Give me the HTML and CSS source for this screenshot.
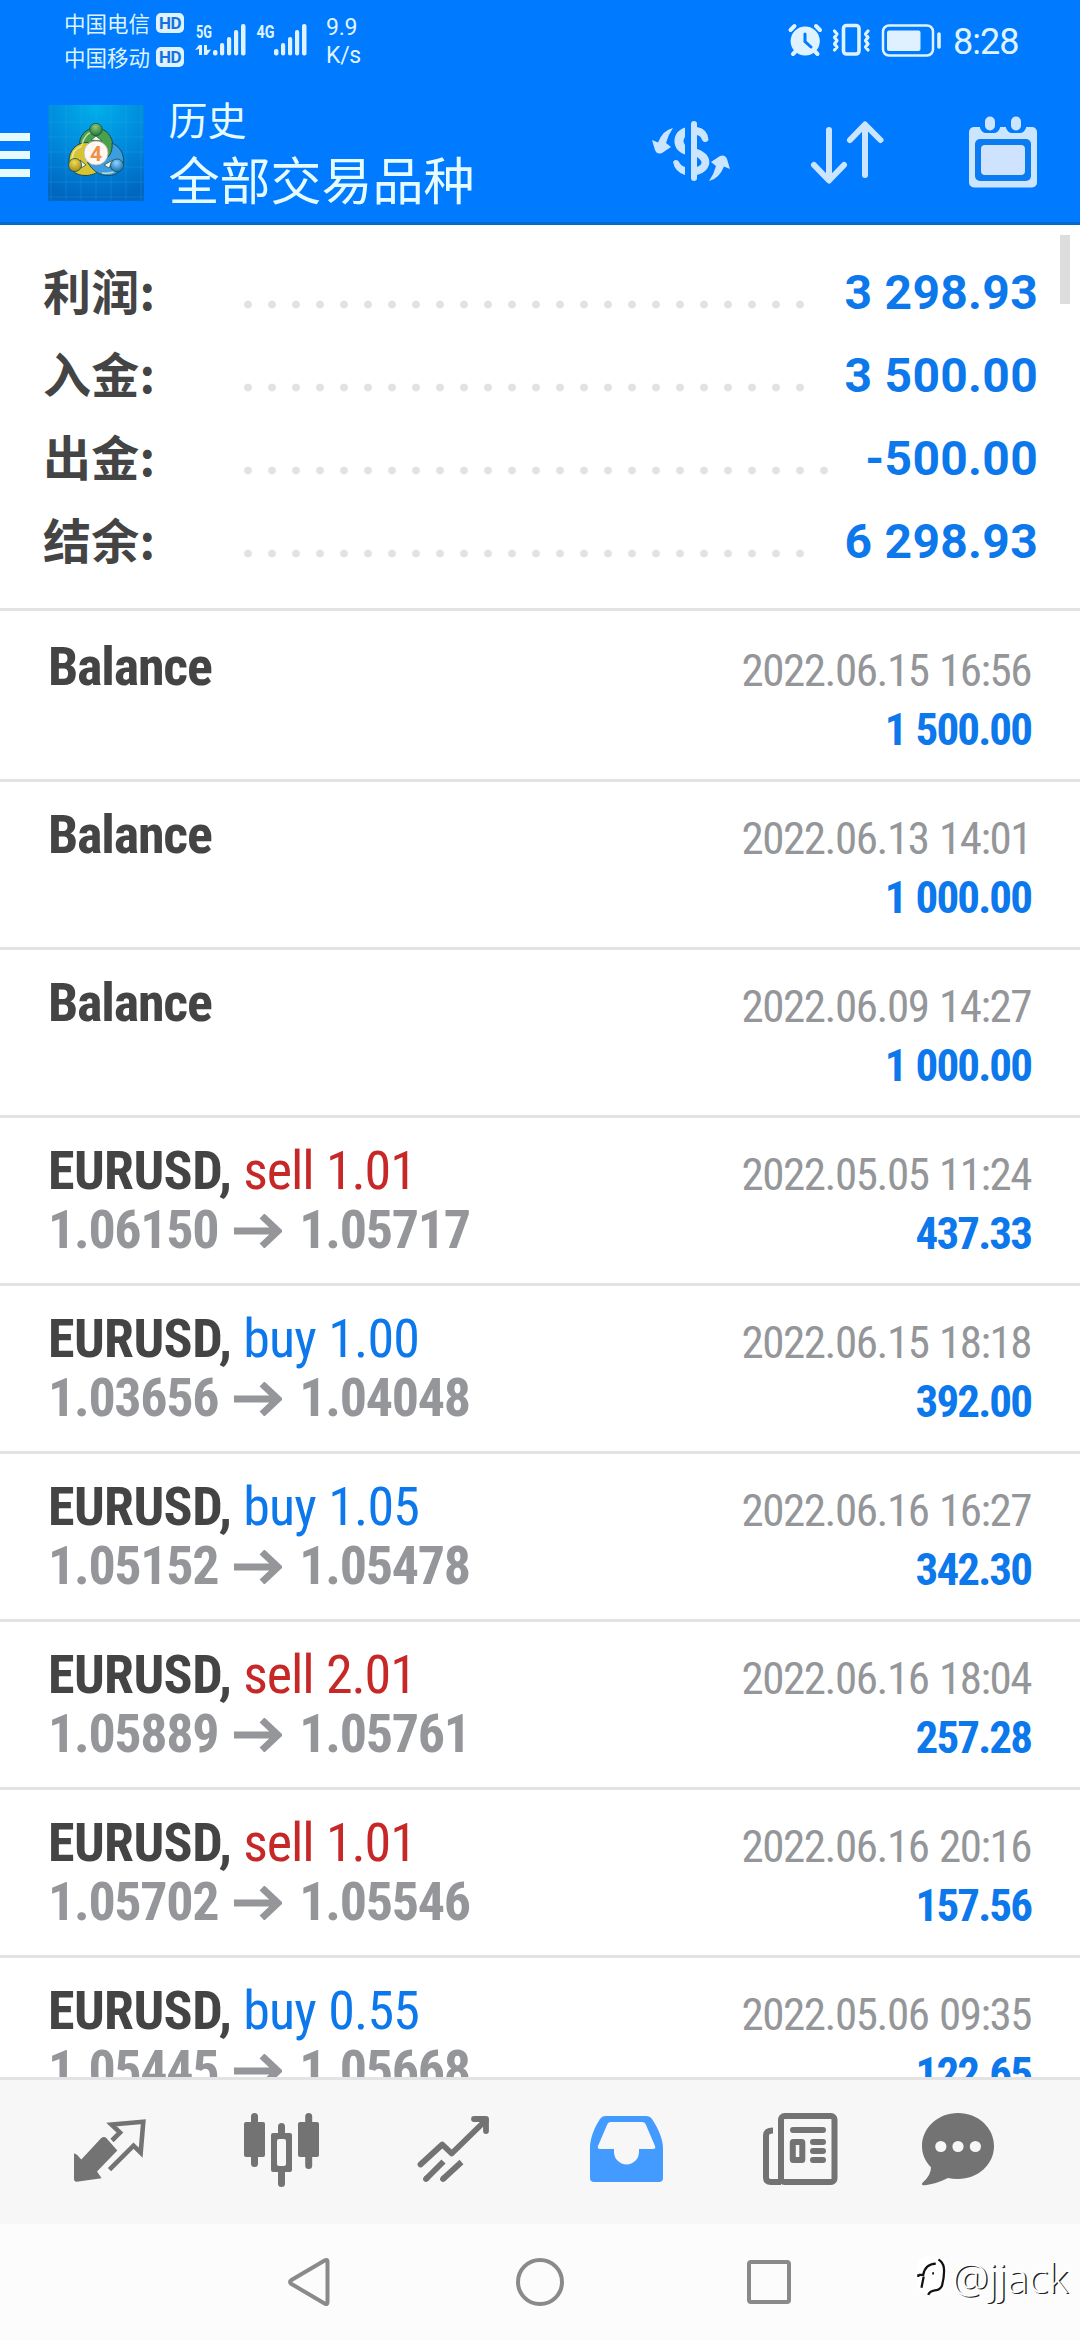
FILE: index.html
```html
<!DOCTYPE html>
<html lang="zh-CN">
<head>
<meta charset="utf-8">
<title>历史</title>
<link rel="stylesheet" href="styles.css">
</head>
<body>
<div class="screen">
  <header class="header">
    <div class="status">
      <div class="carriers">
        <div class="carrier"><span>中国电信</span><b class="hd">HD</b></div>
        <div class="carrier"><span>中国移动</span><b class="hd">HD</b></div>
      </div>
      <svg class="signals" viewBox="194 18 116 44" fill="#dff3ff">
        <text class="net" x="196" y="38" textLength="16" lengthAdjust="spacingAndGlyphs">5G</text>
        <path d="M195 50l4-5h3v10h-3v-6zM211 49.500l-4 5.500h-3v-10h3v5z"/>
        <rect x="213" y="50" width="4.500" height="5.500" rx="2"/><rect x="220" y="43" width="4.200" height="12.500" rx="2"/><rect x="227" y="37" width="4.200" height="18.500" rx="2"/><rect x="234" y="30" width="4.200" height="25.500" rx="2"/><rect x="241" y="24" width="4.500" height="31.500" rx="2"/>
        <text class="net" x="256.500" y="38" textLength="18" lengthAdjust="spacingAndGlyphs">4G</text>
        <rect x="274" y="49" width="4.500" height="6.500" rx="2"/><rect x="281" y="43" width="4.200" height="12.500" rx="2"/><rect x="288" y="37" width="4.200" height="18.500" rx="2"/><rect x="295" y="30" width="4.200" height="25.500" rx="2"/><rect x="302" y="24" width="4.500" height="31.500" rx="2"/>
      </svg>
      <div class="speed"><span>9.9</span><span>K/s</span></div>
      <svg class="sysicons" viewBox="784 18 160 44" fill="none" stroke="#dff3ff">
        <circle cx="804.200" cy="41" r="14.600" fill="#dff3ff" stroke="none"/>
        <path d="M789.500 30l4-4M819 30l-4-4M792 54l4-4M816.500 54l-4-4" stroke-width="4" stroke-linecap="round"/>
        <path d="M804 34v7.500l6 5.500" stroke="#007aff" stroke-width="3" stroke-linecap="round"/>
        <rect x="842.500" y="25.500" width="15.500" height="28.500" rx="3" stroke-width="3.600"/>
        <path d="M833.500 31l2.500 3-2.500 3.500 2.500 3-2.500 3.500 2.500 3-2.500 3M867 31l-2.500 3 2.500 3.500-2.500 3 2.500 3.500-2.500 3 2.500 3" stroke-width="3.200" stroke-linecap="round" stroke-linejoin="round"/>
        <rect x="882" y="25.500" width="50" height="30" rx="6" stroke-width="2.500"/>
        <rect x="886" y="30.500" width="33.500" height="20.500" rx="2" fill="#dff0ff" stroke="none"/>
        <path d="M938 34v13" stroke-width="3.600" stroke-linecap="round"/>
      </svg>
      <span class="clock">8:28</span>
    </div>
    <div class="appbar">
      <div class="menu"><i></i><i></i><i></i></div>
      <svg class="logo" viewBox="0 0 96 96">
        <defs>
          <radialGradient id="bg" cx=".5" cy="0" r="1"><stop offset="0" stop-color="#00b0ea"/><stop offset=".55" stop-color="#0088dc"/><stop offset="1" stop-color="#0066c0"/></radialGradient>
          <radialGradient id="g" cx=".45" cy=".3" r=".7"><stop offset="0" stop-color="#8cc878"/><stop offset="1" stop-color="#1f7a34"/></radialGradient>
          <radialGradient id="y" cx=".45" cy=".3" r=".7"><stop offset="0" stop-color="#f0dc58"/><stop offset="1" stop-color="#a58a12"/></radialGradient>
          <radialGradient id="b" cx=".45" cy=".3" r=".7"><stop offset="0" stop-color="#8fd4fa"/><stop offset="1" stop-color="#156cb4"/></radialGradient>
        </defs>
        <rect width="96" height="96" fill="url(#bg)"/>
        <path d="M3 0v96M18 0v96M33 0v96M48 0v96M63 0v96M78 0v96M93 0v96M0 17h96M0 32h96M0 47h96M0 62h96M0 77h96M0 92h96" stroke="#35b4ec" stroke-opacity=".3" stroke-width=".8"/>
        <g stroke="#174c54" stroke-width="1">
          <path d="M31.500 42c-1-11 6-19 16.500-19s17 9 17 19c0 6-2 10-5 12H36z" fill="#4aa04c"/>
          <path d="M40 37.500C28 37 21 46 21 56c0 9 7 14.500 16 14.500 6 0 12-2 14-5L45 48z" fill="#d6c432"/>
          <path d="M64 38c8 4 11.500 10 11.500 17.500 0 10-7 15-15 15-9 0-15-4-21-13l20-5c4-4 5-9 4.500-14.500z" fill="#3c9de2"/>
        </g>
        <path d="M34 40c1-7 6-13 13-14M24 55c0-7 4-12 10-14M54 68c8 1 15-1 18-8" stroke="#f0f8c8" stroke-width="1.600" fill="none" opacity=".7"/>
        <path d="M43 35l5-4 6 5zM33 63l-1-8 6 5zM61 63l4-8-9 5z" fill="#f2f7ea" stroke="#285a50" stroke-width=".8"/>
        <g stroke="#174c54" stroke-width=".8"><circle cx="48" cy="24.500" r="6.200" fill="url(#g)"/><circle cx="27" cy="60" r="6.500" fill="url(#y)"/><circle cx="69" cy="60.500" r="6.500" fill="url(#b)"/></g>
        <circle cx="48" cy="48" r="12" fill="#fff7f2" stroke="#bcb8a4" stroke-width=".8"/>
        <text class="logo-four" x="48" y="55.500" text-anchor="middle">4</text>
      </svg>
      <div class="titles"><span class="title-small">历史</span><span class="title-big">全部交易品种</span></div>
      <div class="actions">
        <svg viewBox="650 114 80 80" fill="#cce5ff">
          <rect x="690" y="121" width="6" height="60" rx="3"/>
          <path d="M684 127.500c-14 4-14 23 0 27v-9.500q-3-4 0-8zM696 127q11 2 11.500 13c-2 3-5 2.500-6.500 0q-1-4-5-5zM672 162c2-3 5-2 6 0q2 4 6 5v8q-10-3-12-13zM696 149c17 5 16 22 0 26v-8q9-4 0-10z"/>
          <path d="M672 128q-10 2-15 14.500l-6-2.500 3 10q2 5 7 3l9-6-5-4q2-8 7-15z"/>
          <path d="M672 128q-10 2-15 14.500l-6-2.500 3 10q2 5 7 3l9-6-5-4q2-8 7-15z" transform="rotate(180 690 154.500)"/>
        </svg>
        <svg class="sort" viewBox="807 114 80 80" fill="none" stroke="#cce5ff" stroke-width="6" stroke-linecap="round" stroke-linejoin="round"><path d="M828 130v50M813 165l15 15.500 15-15.500M864 175v-50M849 140l15-15.500 15.500 15.500"/></svg>
        <svg class="calendar" viewBox="962 114 80 80">
          <rect x="968" y="127" width="68" height="60.500" rx="5" fill="#cce5ff"/>
          <path d="M979 124h20v4q-2 5-6 5h-8q-4 0-6-5zM1005 124h20v4q-2 5-6 5h-8q-4 0-6-5z" fill="#007aff"/>
          <rect x="984" y="116.500" width="10" height="14" rx="5" fill="#cce5ff"/><rect x="1010" y="116.500" width="10" height="14" rx="5" fill="#cce5ff"/>
          <rect x="974" y="139" width="56" height="42" rx="5" fill="#0a7bf0"/><rect x="980" y="145" width="44" height="30" rx="4" fill="#cfe3ff"/>
        </svg>
      </div>
    </div>
  </header>

  <main class="content">
    <section class="summary">
      <div class="sum-row"><span class="sum-label">利润:</span><i class="leader"></i><b class="sum-value">3 298.93</b></div>
      <div class="sum-row"><span class="sum-label">入金:</span><i class="leader"></i><b class="sum-value">3 500.00</b></div>
      <div class="sum-row"><span class="sum-label">出金:</span><i class="leader"></i><b class="sum-value">-500.00</b></div>
      <div class="sum-row"><span class="sum-label">结余:</span><i class="leader"></i><b class="sum-value">6 298.93</b></div>
    </section>
    <i class="scrollbar"></i>
    <section class="deals">
      <article class="deal"><div class="left"><p><b class="op">Balance</b></p></div><div class="right"><p class="date">2022.06.15 16:56</p><p class="amount">1 500.00</p></div></article>
      <article class="deal"><div class="left"><p><b class="op">Balance</b></p></div><div class="right"><p class="date">2022.06.13 14:01</p><p class="amount">1 000.00</p></div></article>
      <article class="deal"><div class="left"><p><b class="op">Balance</b></p></div><div class="right"><p class="date">2022.06.09 14:27</p><p class="amount">1 000.00</p></div></article>
      <article class="deal"><div class="left"><p><b>EURUSD,</b> <span class="sell">sell 1.01</span></p><p class="prices">1.06150<svg class="arrow" viewBox="0 0 48 34"><path d="M0 17h44M28 2l16 15-16 15"/></svg>1.05717</p></div><div class="right"><p class="date">2022.05.05 11:24</p><p class="amount">437.33</p></div></article>
      <article class="deal"><div class="left"><p><b>EURUSD,</b> <span class="buy">buy 1.00</span></p><p class="prices">1.03656<svg class="arrow" viewBox="0 0 48 34"><path d="M0 17h44M28 2l16 15-16 15"/></svg>1.04048</p></div><div class="right"><p class="date">2022.06.15 18:18</p><p class="amount">392.00</p></div></article>
      <article class="deal"><div class="left"><p><b>EURUSD,</b> <span class="buy">buy 1.05</span></p><p class="prices">1.05152<svg class="arrow" viewBox="0 0 48 34"><path d="M0 17h44M28 2l16 15-16 15"/></svg>1.05478</p></div><div class="right"><p class="date">2022.06.16 16:27</p><p class="amount">342.30</p></div></article>
      <article class="deal"><div class="left"><p><b>EURUSD,</b> <span class="sell">sell 2.01</span></p><p class="prices">1.05889<svg class="arrow" viewBox="0 0 48 34"><path d="M0 17h44M28 2l16 15-16 15"/></svg>1.05761</p></div><div class="right"><p class="date">2022.06.16 18:04</p><p class="amount">257.28</p></div></article>
      <article class="deal"><div class="left"><p><b>EURUSD,</b> <span class="sell">sell 1.01</span></p><p class="prices">1.05702<svg class="arrow" viewBox="0 0 48 34"><path d="M0 17h44M28 2l16 15-16 15"/></svg>1.05546</p></div><div class="right"><p class="date">2022.06.16 20:16</p><p class="amount">157.56</p></div></article>
      <article class="deal"><div class="left"><p><b>EURUSD,</b> <span class="buy">buy 0.55</span></p><p class="prices">1.05445<svg class="arrow" viewBox="0 0 48 34"><path d="M0 17h44M28 2l16 15-16 15"/></svg>1.05668</p></div><div class="right"><p class="date">2022.05.06 09:35</p><p class="amount">122.65</p></div></article>
    </section>
  </main>

  <nav class="tabs">
    <svg viewBox="70 2108 80 80"><path d="M103.300 2137q1.500-.5 3 1l11 12.500-20.300 21 4.600 6.800-25 3.400q-2.600 0-2.600-3v-25.400l3 1.500 4.300 4.700 20-21.500z" fill="#737373"/><path d="M112 2140.500l8-8-8.500-8 31.800-2.800-2.600 31-7.200-7-24 24" fill="none" stroke="#737373" stroke-width="4.600"/></svg>
    <svg viewBox="242 2108 80 80" fill="#737373"><rect x="251" y="2113" width="7" height="54" rx="3.500"/><rect x="244" y="2122" width="21" height="35" rx="2"/><rect x="305.200" y="2113" width="7" height="56" rx="3.500"/><rect x="298" y="2122" width="21" height="35" rx="2"/><rect x="278" y="2123" width="7" height="64" rx="3.500"/><rect x="271" y="2133" width="21" height="39" rx="2"/><rect x="277" y="2139" width="9" height="27" rx="2" fill="#f7f7f7"/></svg>
    <svg viewBox="414 2108 80 80" fill="none" stroke="#737373" stroke-width="5.800" stroke-linejoin="round"><path d="M420.500 2164.500l21.800-20 9.400 9 34.300-33.500" stroke-linecap="round"/><path d="M474 2119h12v12M426 2179l.5-.5M443 2179l.5-.5" stroke-linecap="round"/><path d="M426 2179l17.500-17.500M443 2179l18.500-17"/></svg>
    <svg viewBox="586 2108 80 80" fill="#439bff"><path fill-rule="evenodd" d="M605 2116h41q4 0 6 3c6 9 11 20 11 29v30q0 4-4 4h-65q-4 0-4-4v-30c0-9 4-20 10-29q2-3 5-3zM611 2122q-3 0-4 3l-9 21q-1 3 2 3h14v3a12.500 12.500 0 0 0 25 0v-3h14q3 0 2-3l-9-21q-1-3-4-3z"/></svg>
    <svg viewBox="758 2108 80 80" fill="none" stroke="#737373"><rect x="781" y="2116" width="53.500" height="66" rx="3.500" stroke-width="6"/><path d="M773 2130.500q-7 0-7 5v42q0 4.500 5 4.500h10" stroke-width="6"/><path d="M793 2130h30M813 2142h10M813 2151h10M813 2160h10" stroke-width="6" stroke-linecap="round"/><rect x="792.800" y="2142" width="9.500" height="18" rx=".5" stroke-width="6" stroke-linejoin="round"/></svg>
    <svg class="chat" viewBox="916 2108 80 80"><path d="M958 2113c20 0 36 14.500 36 33s-16 33-36 33q-6 0-10-1-12 6-23 7.200c-3 .3-4-1-2-3q8-7 8-15c-6-6-9-13-9-21 0-18.500 16-33.200 36-33.200z" fill="#737373"/><g fill="#f7f7f7"><circle cx="940.800" cy="2146.500" r="5.600"/><circle cx="958" cy="2146.500" r="5.600"/><circle cx="975.400" cy="2146.500" r="5.600"/></g></svg>
  </nav>

  <footer class="sysnav">
    <svg viewBox="0 0 56 56"><path d="M43 6.300q2.500-1.300 2.500 1.500v40.400q0 2.800-2.500 1.500L9.500 30q-3-2 0-4z"/></svg>
    <svg viewBox="0 0 56 56"><circle cx="28" cy="28" r="22"/></svg>
    <svg viewBox="0 0 56 56"><rect x="7" y="8" width="40" height="40" rx="2"/></svg>
    <div class="watermark">
      <svg viewBox="0 0 38 46"><rect class="plate" x="0" y="0" width="34" height="42" rx="12"/><path class="ink" d="M2 20.500h5q2-12 14-12.500M7.500 22.500L5 35M1.500 20v3M24 3.500q5 3 6 9 1 8-2 20-2 5-8 5.500-6 1-7.500 5M17 19h2"/></svg>
      <span>@jjack</span>
    </div>
  </footer>
</div>
</body>
</html>
```
FILE: styles.css
```css
* { box-sizing: border-box; }
body { margin: 0; background: #fff; font-family: Roboto, "Noto Sans CJK SC", sans-serif; }
p { margin: 0; }
svg { display: block; flex: none; }
.screen { width: 1080px; height: 2340px; display: flex; flex-direction: column; overflow: hidden; }

.header { height: 225px; flex: none; background: #007aff; border-bottom: 3px solid #0a68cd; color: #e6fbff; }
.status { display: flex; height: 80px; padding: 6px 0 0 64px; color: #dff3ff; }
.carriers { width: 130px; font: 21.5px/34px "Noto Sans CJK SC", sans-serif; }
.carrier { display: flex; align-items: center; gap: 6px; }
.hd { width: 28px; height: 20px; border-radius: 5px; background: #dff3ff; color: #1573dc; font: 700 17px/20px Roboto, sans-serif; text-align: center; letter-spacing: -.5px; }
.signals { width: 116px; height: 44px; margin-top: 12px; }
.net { font: 700 19px Roboto, sans-serif; }
.speed { display: flex; flex-direction: column; width: 60px; margin: 8px 0 0 16px; font-size: 23px; line-height: 28px; letter-spacing: -.3px; }
.sysicons { width: 160px; height: 44px; margin: 12px 0 0 399px; }
.clock { margin: 14px 0 0 8px; font-size: 36px; line-height: 44px; letter-spacing: -1px; }

.appbar { display: flex; height: 142px; }
.menu { width: 30px; padding-top: 53px; display: flex; flex-direction: column; gap: 10px; }
.menu i { height: 8px; background: #e6fbff; }
.logo { width: 96px; height: 96px; margin: 25px 0 0 18px; }
.logo-four { font: 700 21px Roboto, sans-serif; fill: #f09048; }
.titles { display: flex; flex-direction: column; width: 400px; margin: 10px 0 0 24.500px; font-family: "Noto Sans CJK SC", sans-serif; }
.title-small { font-size: 39px; line-height: 56px; }
.title-big { font-size: 51px; line-height: 64px; }
.actions { display: flex; margin: 34px 0 0 82px; }
.actions svg { width: 80px; height: 80px; }
.actions .sort { margin-left: 77px; }
.actions .calendar { margin-left: 75px; }

.content { height: 1855px; flex: none; position: relative; overflow: hidden; border-bottom: 3px solid #e3e3e3; }
.summary { height: 386px; padding: 26px 42px 0 43px; border-bottom: 3px solid #e3e3e3; }
.sum-row { display: flex; height: 83px; line-height: 83px; font-size: 48px; }
.sum-label { width: 201px; color: #444; font-family: "Noto Sans CJK SC", sans-serif; font-weight: 700; line-height: 77px; letter-spacing: .3px; }
.leader { flex: 1; margin-right: 30px; background: radial-gradient(circle at 4px 53.500px, #e2e2e2 3.500px, transparent 4.300px) 0 0 / 24px 83px; }
.sum-value { color: #0c78ec; letter-spacing: .3px; }
.scrollbar { position: absolute; top: 10px; right: 10px; width: 10px; height: 69px; background: #ddd; }

.deals { padding-top: 3px; font-family: "Roboto Condensed", Roboto, sans-serif; font-stretch: 75%; }
.deal { display: flex; justify-content: space-between; height: 168px; padding: 0 49px 0 48px; border-bottom: 3px solid #e3e3e3; line-height: 59px; white-space: nowrap; }
.left { padding-top: 23px; font-size: 54px; color: #444; letter-spacing: -.6px; }
.op { letter-spacing: -1.200px; }
.right { padding-top: 27px; font-size: 45px; text-align: right; }
.sell { color: #c62828; letter-spacing: -1.100px; word-spacing: 1px; }
.buy { color: #0c78ec; letter-spacing: -.9px; word-spacing: 1px; }
.prices { display: flex; color: #949699; font-weight: 700; letter-spacing: -1.300px; }
.arrow { width: 48px; height: 34px; margin: 14px 17px 0 16px; fill: none; stroke: #949699; stroke-width: 7px; }
.date { color: #949699; letter-spacing: -1.450px; word-spacing: 1.500px; }
.amount { color: #0c78ec; font-weight: 700; letter-spacing: -1.900px; word-spacing: 1.500px; }

.tabs { display: flex; gap: 92px; height: 144px; flex: none; padding: 28px 0 0 70px; background: #f7f7f7; }
.tabs svg { width: 80px; height: 80px; }
.tabs .chat { margin-left: -14px; }
.sysnav { display: flex; height: 116px; padding: 30px 0 0 282px; background: #fcfcfc; }
.sysnav > svg { width: 56px; height: 56px; margin-right: 174px; fill: none; stroke: #8a8a8a; stroke-width: 4px; }
.sysnav > svg:nth-child(3) { margin-right: 119px; }
.watermark { display: flex; gap: 1px; padding-top: 0; color: #fff; font: 300 41px/46px "Open Sans", sans-serif; text-shadow: 1.500px 1px 0 #222; }
.watermark svg { width: 34px; height: 46px; fill: none; }
.plate { fill: #fff; }
.ink { stroke: #111; stroke-width: 2.500px; }
```
